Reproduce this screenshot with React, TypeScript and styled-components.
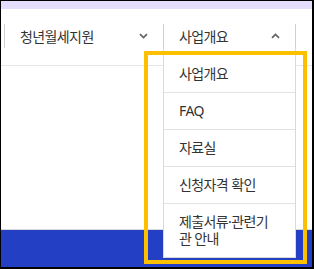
import React from "react";
import styled, { createGlobalStyle } from "styled-components";

const Global = createGlobalStyle`
  html, body {
    margin: 0;
    padding: 0;
    background: #fff;
  }
  body {
    font-family: "Noto Sans", "Noto Sans CJK KR", sans-serif;
    color: #333;
  }
`;

const Frame = styled.div`
  position: relative;
  box-sizing: border-box;
  width: 314px;
  height: 269px;
  overflow: hidden;
  display: flex;
  flex-direction: column;
  background: #fff;
  border-style: solid;
  border-color: #000;
  border-width: 1px 2px 2px 1px;
`;

const TopStrip = styled.div`
  height: 8px;
  flex: none;
  background: #e4ddfb;
`;

const Header = styled.header`
  flex: none;
  height: 56px;
  border-bottom: 1px solid #e6e6e6;
  position: relative;
  z-index: 2;
`;

const Nav = styled.nav`
  display: flex;
  margin: 15px 0 0 3px;
  height: 24px;
`;

const Tab = styled.div<{ $w?: number }>`
  position: relative;
  box-sizing: border-box;
  ${(p) => (p.$w ? `width: ${p.$w}px; flex: none;` : "flex: 1;")}
  height: 24px;
  display: flex;
  align-items: center;
  justify-content: space-between;
  padding: 0 15px;
  border-left: 1px solid #cfcfcf;
  font-size: 14px;
  letter-spacing: -0.6px;
  color: #333;
`;

const Chevron = styled.svg`
  width: 9px;
  height: 6px;
  flex: none;
`;

const Panel = styled.ul`
  position: absolute;
  top: 100%;
  left: -1px;
  width: 133px;
  box-sizing: border-box;
  margin: 0;
  padding: 8px 0 0;
  list-style: none;
  background: #fff;
  border: 1px solid #d9d9d9;
  border-top: none;
`;

const Item = styled.li<{ $last?: boolean }>`
  padding: ${(p) => (p.$last ? "9px 15px 10px" : "9px 15px")};
  line-height: ${(p) => (p.$last ? "17px" : "18px")};
  font-size: 14px;
  letter-spacing: -0.6px;
  color: #333;
  border-bottom: ${(p) => (p.$last ? "none" : "1px solid #e2e2e2")};
  line-break: anywhere;
`;

const Main = styled.main`
  flex: 1;
`;

const Band = styled.footer`
  flex: none;
  height: 37px;
  border-top: 1px solid #d8d8d8;
  background: #2340c4;
`;

const Highlight = styled.div`
  position: absolute;
  left: 143px;
  top: 50px;
  width: 163px;
  height: 213px;
  box-sizing: border-box;
  border: 4px solid #fdc000;
  pointer-events: none;
  z-index: 5;
`;

const Down = () => (
  <Chevron viewBox="0 0 9 6">
    <path d="M1 1.2 L4.5 4.6 L8 1.2" fill="none" stroke="#666" strokeWidth="1.8" />
  </Chevron>
);

const Up = () => (
  <Chevron viewBox="0 0 9 6">
    <path d="M1 4.8 L4.5 1.4 L8 4.8" fill="none" stroke="#666" strokeWidth="1.8" />
  </Chevron>
);

const menu = ["사업개요", "FAQ", "자료실", "신청자격 확인", "제출서류·관련기관 안내"];

export default function App() {
  return (
    <>
      <Global />
      <Frame>
        <TopStrip />
        <Header>
          <Nav>
            <Tab $w={159}>
              <span>청년월세지원</span>
              <Down />
            </Tab>
            <Tab $w={132}>
              <span>사업개요</span>
              <Up />
              <Panel>
                {menu.map((m, i) => (
                  <Item key={m} $last={i === menu.length - 1}>
                    {m}
                  </Item>
                ))}
              </Panel>
            </Tab>
            <Tab />
          </Nav>
        </Header>
        <Main />
        <Band />
        <Highlight />
      </Frame>
    </>
  );
}
